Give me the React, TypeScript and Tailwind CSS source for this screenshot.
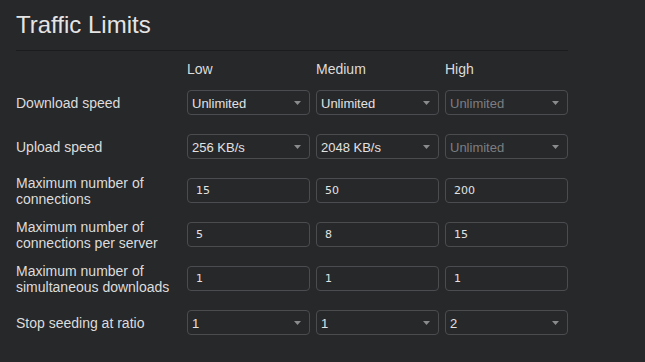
import { ReactNode } from "react";

type Field =
  | { kind: "select"; value: string; disabled?: boolean }
  | { kind: "input"; value: string };

interface Row {
  label: ReactNode;
  fields: Field[];
}

const rows: Row[] = [
  {
    label: "Download speed",
    fields: [
      { kind: "select", value: "Unlimited" },
      { kind: "select", value: "Unlimited" },
      { kind: "select", value: "Unlimited", disabled: true },
    ],
  },
  {
    label: "Upload speed",
    fields: [
      { kind: "select", value: "256 KB/s" },
      { kind: "select", value: "2048 KB/s" },
      { kind: "select", value: "Unlimited", disabled: true },
    ],
  },
  {
    label: "Maximum number of connections",
    fields: [
      { kind: "input", value: "15" },
      { kind: "input", value: "50" },
      { kind: "input", value: "200" },
    ],
  },
  {
    label: "Maximum number of connections per server",
    fields: [
      { kind: "input", value: "5" },
      { kind: "input", value: "8" },
      { kind: "input", value: "15" },
    ],
  },
  {
    label: "Maximum number of simultaneous downloads",
    fields: [
      { kind: "input", value: "1" },
      { kind: "input", value: "1" },
      { kind: "input", value: "1" },
    ],
  },
  {
    label: "Stop seeding at ratio",
    fields: [
      { kind: "select", value: "1" },
      { kind: "select", value: "1" },
      { kind: "select", value: "2" },
    ],
  },
];

const SelectBox = ({ value, disabled }: { value: string; disabled?: boolean }) => (
  <div className="relative h-[25px] w-[123px] rounded-[4px] border border-[#4b4c4f] bg-[#27282a]">
    <select
      disabled={disabled}
      defaultValue={value}
      className={
        "h-full w-full appearance-none bg-transparent pl-[4px] text-[13px] leading-[23px] outline-none " +
        (disabled ? "text-[#7d7e80]" : "text-[#e2e2e2]")
      }
      style={{ fontFamily: '"Liberation Sans", Arial, sans-serif' }}
    >
      <option value={value}>{value}</option>
    </select>
    <svg
      className="pointer-events-none absolute right-[8px] top-[10px]"
      width="7"
      height="4"
      viewBox="0 0 7 4"
    >
      <path d="M0 0h7L3.5 4z" fill="#8a8b8d" />
    </svg>
  </div>
);

const TextBox = ({ value }: { value: string }) => (
  <input
    type="text"
    defaultValue={value}
    className="h-[25px] w-[123px] rounded-[4px] border border-[#4b4c4f] bg-[#27282a] px-[8px] text-[11px] text-[#e2e2e2] outline-none"
    style={{ fontFamily: '"DejaVu Sans", Verdana, sans-serif' }}
  />
);

export default function App() {
  return (
    <div
      className="min-h-[362px] w-full bg-[#27282a] px-[16px] pt-[11px] text-[#dcdcdc]"
      style={{ fontFamily: '"Liberation Sans", Arial, sans-serif' }}
    >
      <div className="w-[552px]">
        <h1 className="text-[24px] leading-[28px] text-[#e4e4e4]">Traffic Limits</h1>
        <div className="mt-[11px] h-px bg-[#1b1c1e]" />

        <div className="mt-[10px] grid grid-cols-[165px_123px_123px_123px] gap-x-[6px] text-[14px] leading-[16px]">
          <div />
          <div>Low</div>
          <div>Medium</div>
          <div>High</div>
        </div>

        <div className="mt-[13px] flex flex-col gap-[19px]">
          {rows.map((row, i) => (
            <div
              key={i}
              className="grid h-[25px] grid-cols-[165px_123px_123px_123px] grid-rows-[25px] items-center gap-x-[6px]"
            >
              <div className="text-[14px] leading-[16px] text-[#dcdcdc]">
                {row.label}
              </div>
              {row.fields.map((f, j) =>
                f.kind === "select" ? (
                  <SelectBox key={j} value={f.value} disabled={f.disabled} />
                ) : (
                  <TextBox key={j} value={f.value} />
                )
              )}
            </div>
          ))}
        </div>
      </div>
    </div>
  );
}
